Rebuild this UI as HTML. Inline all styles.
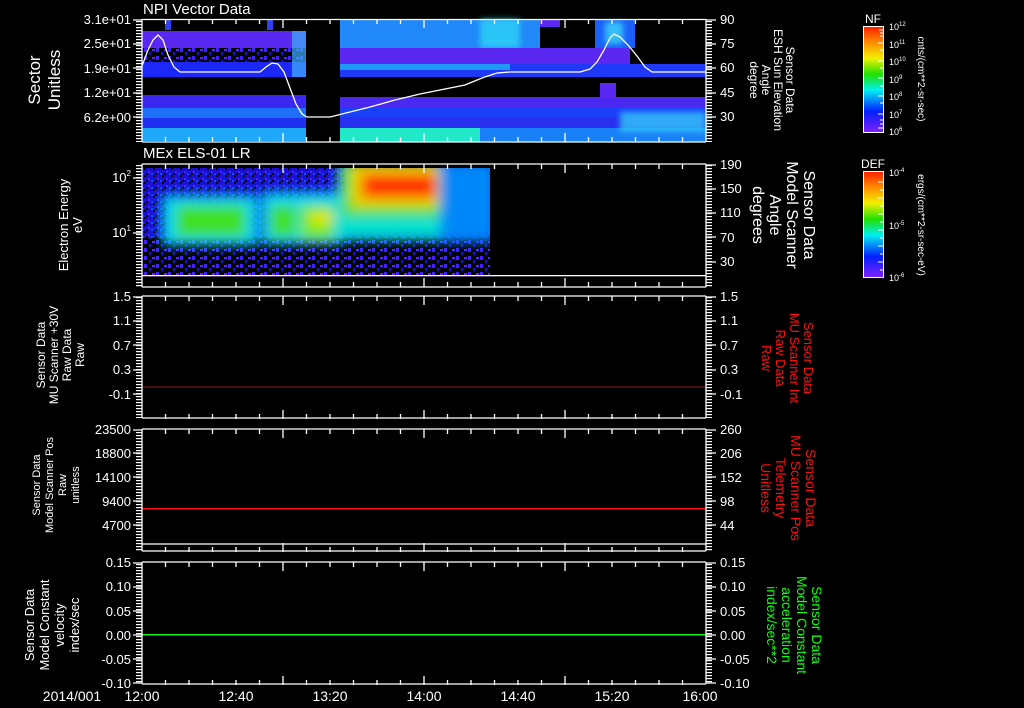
<!DOCTYPE html>
<html><head><meta charset="utf-8"><style>
html,body{margin:0;padding:0;background:#000;width:1024px;height:708px;overflow:hidden}
svg{display:block}
text{font-family:"Liberation Sans",sans-serif;fill:#fff}
</style></head><body>
<svg width="1024" height="708" viewBox="0 0 1024 708" xmlns="http://www.w3.org/2000/svg">
<defs>
<linearGradient id="cb" x1="0" y1="0" x2="0" y2="1">
<stop offset="0" stop-color="#ff2000"/><stop offset="0.15" stop-color="#ff8c00"/><stop offset="0.3" stop-color="#f0f000"/><stop offset="0.45" stop-color="#20e000"/><stop offset="0.6" stop-color="#00f0f0"/><stop offset="0.8" stop-color="#0020ff"/><stop offset="1" stop-color="#8020ff"/>
</linearGradient>
<filter id="bl" x="-30%" y="-30%" width="160%" height="160%"><feGaussianBlur stdDeviation="6"/></filter>
<filter id="bl2" x="-30%" y="-30%" width="160%" height="160%"><feGaussianBlur stdDeviation="3"/></filter>
<clipPath id="c2"><rect x="142" y="168" width="348" height="107"/></clipPath>
<pattern id="spk" width="12" height="8" patternUnits="userSpaceOnUse">
<rect width="12" height="8" fill="#000"/><rect x="0" y="0" width="3" height="4" fill="#4020ff"/><rect x="5" y="4" width="2" height="3" fill="#2010e0"/><rect x="8" y="1" width="3" height="2" fill="#6020ff"/>
</pattern>
<pattern id="noise" width="9" height="7" patternUnits="userSpaceOnUse">
<rect width="9" height="7" fill="#1a10d0"/><rect x="0" y="0" width="2" height="2" fill="#000"/><rect x="4" y="3" width="2" height="2" fill="#5020ff"/><rect x="7" y="5" width="2" height="2" fill="#0050ff"/><rect x="2" y="5" width="2" height="2" fill="#000"/>
</pattern>
<pattern id="tk" width="6" height="3" patternUnits="userSpaceOnUse">
<rect width="6" height="1.2" fill="#fff"/>
</pattern>
</defs>

<!-- Panel 1 spectrogram -->
<g>
<rect x="142" y="31" width="164" height="17" fill="#5a28f0"/>
<rect x="142" y="48" width="164" height="14" fill="url(#spk)"/>
<rect x="142" y="62" width="164" height="15" fill="#1c28f8"/>
<rect x="142" y="95" width="164" height="13" fill="#3a28f0"/>
<rect x="142" y="108" width="164" height="10" fill="#1e70f8"/>
<rect x="142" y="118" width="164" height="10" fill="#2030f0"/>
<rect x="142" y="128" width="164" height="13" fill="#20a8f8"/>
<rect x="292" y="31" width="14" height="46" fill="#40b0f8" opacity="0.7"/>
<rect x="165" y="20" width="6" height="10" fill="#3040f0"/>
<rect x="267" y="20" width="6" height="10" fill="#3040f0"/>

<rect x="340" y="19" width="200" height="29" fill="#2088f8"/>
<rect x="480" y="19" width="40" height="29" fill="#30e0f8" opacity="0.7" filter="url(#bl2)"/>
<rect x="540" y="19" width="20" height="8" fill="#5a28f0"/>
<rect x="595" y="19" width="40" height="29" fill="#1a60f8"/>
<rect x="605" y="22" width="18" height="22" fill="#40e8f8" opacity="0.7" filter="url(#bl2)"/>
<rect x="340" y="48" width="290" height="16" fill="#5a28f0"/>
<rect x="340" y="64" width="366" height="13" fill="#2038f8"/>
<rect x="340" y="64" width="170" height="6" fill="#2098f8"/>
<rect x="600" y="83" width="16" height="14" fill="#5a28f0"/>
<rect x="340" y="97" width="366" height="10" fill="#4a28f0"/>
<rect x="340" y="107" width="366" height="10" fill="#1a40f8"/>
<rect x="340" y="117" width="366" height="11" fill="#2a30f0"/>
<rect x="340" y="128" width="366" height="14" fill="#1a80f8"/>
<rect x="340" y="128" width="140" height="14" fill="#20e8c8"/>
<rect x="620" y="112" width="86" height="20" fill="#30c8f8" opacity="0.8" filter="url(#bl2)"/>
<polyline fill="none" stroke="#fff" stroke-width="1.3" points="142,66 148,50 153,40 158,35 163,40 168,55 174,67 180,72 260,72 266,67 272,63 278,64 284,72 290,88 296,104 302,114 307,117 330,117 350,112 370,107 395,100 420,94 445,89 465,85 482,78 497,73 510,72 580,72 590,69 597,62 604,50 610,38 614,34 620,37 628,45 637,56 645,67 652,72 706,72"/>
</g>

<!-- Panel 2 spectrogram -->
<g clip-path="url(#c2)">
<rect x="142" y="168" width="348" height="70" fill="url(#noise)"/>
<rect x="142" y="238" width="348" height="37" fill="url(#spk)"/>
<g filter="url(#bl)">
<rect x="162" y="195" width="96" height="50" fill="#00d8f0"/>
<rect x="176" y="205" width="70" height="32" fill="#40e020"/>
<rect x="262" y="192" width="80" height="52" fill="#00d8f0"/>
<rect x="270" y="205" width="26" height="32" fill="#40e020"/>
<rect x="300" y="205" width="34" height="35" fill="#70e820"/>
<rect x="310" y="212" width="22" height="12" fill="#e8e800"/>
<rect x="338" y="162" width="105" height="78" fill="#00e0d0"/>
<rect x="342" y="162" width="98" height="54" fill="#60e020"/>
<rect x="352" y="165" width="86" height="41" fill="#f0d000"/>
<rect x="362" y="174" width="74" height="24" fill="#ff3000"/>
<rect x="440" y="162" width="56" height="80" fill="#0088f8"/>
</g>
</g>
<rect x="142" y="275" width="564" height="1.3" fill="#fff"/>

<!-- Data lines -->
<rect x="142" y="386.5" width="564" height="1" fill="#8a2020"/>
<rect x="142" y="508" width="564" height="1.4" fill="#ff1010"/>
<rect x="142" y="634" width="564" height="1.4" fill="#10ff10"/>

<!-- Panel frames -->
<g fill="none" stroke="#fff" stroke-width="1.3">
<path d="M142,19.5H706M142,142H706M142,164H706M142,287H706M142,296H706M142,418H706M142,429H706M142,544H706M142,551H706M142,562H706M142,684H706"/>
<path d="M142,19V142M706,19V142M142,164V287M706,164V287M142,296V418M706,296V418M142,429V551M706,429V551M142,562V684M706,562V684"/>
</g>
<!-- dense axis ticks -->
<g fill="url(#tk)">
<rect x="136" y="20" width="6" height="122"/><rect x="706" y="20" width="6" height="122"/>
<rect x="136" y="165" width="6" height="122"/><rect x="706" y="165" width="6" height="122"/>
<rect x="136" y="297" width="6" height="121"/><rect x="706" y="297" width="6" height="121"/>
<rect x="136" y="430" width="6" height="121"/><rect x="706" y="430" width="6" height="121"/>
<rect x="136" y="563" width="6" height="121"/><rect x="706" y="563" width="6" height="121"/>
</g>
<g stroke="#fff" stroke-width="1.3">
<path d="M133,20H142M133,44H142M133,68H142M133,93H142M133,117H142M706,20H716M706,44H716M706,68H716M706,93H716M706,117H716"/>
<path d="M706,165H716M706,189H716M706,213H716M706,237H716M706,262H716M133,178H142M133,233H142"/>
<path d="M706,297H716M706,321H716M706,345H716M706,370H716M706,394H716M133,297H142M133,321H142M133,345H142M133,370H142M133,394H142"/>
<path d="M706,430H716M706,453H716M706,477H716M706,501H716M706,525H716M133,430H142M133,453H142M133,477H142M133,501H142M133,525H142"/>
<path d="M706,563H716M706,587H716M706,611H716M706,635H716M706,659H716M706,683H716M133,563H142M133,587H142M133,611H142M133,635H142M133,659H142M133,683H142"/>
</g>
<!-- time ticks -->
<g stroke="#fff" stroke-width="1.3" id="tt">
<path d="M165.5,19v5M189,19v5M212.5,19v5M236,19v5M259.5,19v5M283,19v9M306.5,19v5M330,19v5M353.5,19v5M377,19v5M400.5,19v5M424,19v9M447.5,19v5M471,19v5M494.5,19v5M518,19v5M541.5,19v5M565,19v9M588.5,19v5M612,19v5M635.5,19v5M659,19v5M682.5,19v5"/>
<path d="M165.5,142v-5M189,142v-5M212.5,142v-5M236,142v-5M259.5,142v-5M283,142v-9M306.5,142v-5M330,142v-5M353.5,142v-5M377,142v-5M400.5,142v-5M424,142v-9M447.5,142v-5M471,142v-5M494.5,142v-5M518,142v-5M541.5,142v-5M565,142v-9M588.5,142v-5M612,142v-5M635.5,142v-5M659,142v-5M682.5,142v-5"/>
</g>
<use href="#tt" y="145"/>
<use href="#tt" y="277"/>
<use href="#tt" y="410"/>
<use href="#tt" y="543"/>

<!-- Left axis labels -->
<g font-size="13" text-anchor="end">
<text x="131" y="24">3.1e+01</text><text x="131" y="48">2.5e+01</text><text x="131" y="73">1.9e+01</text><text x="131" y="97">1.2e+01</text><text x="131" y="122">6.2e+00</text>
<text x="131" y="182">10<tspan font-size="8" dy="-6">2</tspan></text><text x="131" y="237">10<tspan font-size="8" dy="-6">1</tspan></text>
<text x="131" y="301">1.5</text><text x="131" y="325">1.1</text><text x="131" y="350">0.7</text><text x="131" y="374">0.3</text><text x="131" y="399">-0.1</text>
<text x="131" y="434">23500</text><text x="131" y="458">18800</text><text x="131" y="482">14100</text><text x="131" y="506">9400</text><text x="131" y="530">4700</text>
<text x="131" y="567">0.15</text><text x="131" y="591">0.10</text><text x="131" y="616">0.05</text><text x="131" y="640">0.00</text><text x="131" y="664">-0.05</text><text x="131" y="688">-0.10</text>
</g>
<!-- Right axis labels -->
<g font-size="13">
<text x="720" y="24">90</text><text x="720" y="48">75</text><text x="720" y="72">60</text><text x="720" y="97">45</text><text x="720" y="121">30</text>
<text x="720" y="169">190</text><text x="720" y="193">150</text><text x="720" y="217">110</text><text x="720" y="242">70</text><text x="720" y="266">30</text>
<text x="720" y="301">1.5</text><text x="720" y="325">1.1</text><text x="720" y="350">0.7</text><text x="720" y="374">0.3</text><text x="720" y="399">-0.1</text>
<text x="720" y="434">260</text><text x="720" y="458">206</text><text x="720" y="482">152</text><text x="720" y="506">98</text><text x="720" y="530">44</text>
<text x="720" y="567">0.15</text><text x="720" y="591">0.10</text><text x="720" y="616">0.05</text><text x="720" y="640">0.00</text><text x="720" y="664">-0.05</text><text x="720" y="688">-0.10</text>
</g>
<!-- titles -->
<text x="143" y="14" font-size="15">NPI Vector Data</text>
<text x="143" y="158" font-size="15">MEx ELS-01 LR</text>
<!-- time labels -->
<g font-size="14" text-anchor="middle">
<text x="72" y="701">2014/001</text><text x="142" y="701">12:00</text><text x="236" y="701">12:40</text><text x="330" y="701">13:20</text><text x="424" y="701">14:00</text><text x="518" y="701">14:40</text><text x="612" y="701">15:20</text><text x="700" y="701">16:00</text>
</g>

<!-- Left rotated labels -->
<g text-anchor="middle">
<text transform="translate(40,80) rotate(-90)" font-size="17"><tspan x="0" y="0">Sector</tspan><tspan x="0" dy="20">Unitless</tspan></text>
<text transform="translate(68,225) rotate(-90)" font-size="13"><tspan x="0" y="0">Electron Energy</tspan><tspan x="0" dy="14">eV</tspan></text>
<text transform="translate(45,355) rotate(-90)" font-size="12"><tspan x="0" y="0">Sensor Data</tspan><tspan x="0" dy="13">MU Scanner +30V</tspan><tspan x="0" dy="13">Raw Data</tspan><tspan x="0" dy="13">Raw</tspan></text>
<text transform="translate(40,485) rotate(-90)" font-size="11"><tspan x="0" y="0">Sensor Data</tspan><tspan x="0" dy="13">Model Scanner Pos</tspan><tspan x="0" dy="13">Raw</tspan><tspan x="0" dy="13">unitless</tspan></text>
<text transform="translate(34,625) rotate(-90)" font-size="13"><tspan x="0" y="0">Sensor Data</tspan><tspan x="0" dy="15">Model Constant</tspan><tspan x="0" dy="15">velocity</tspan><tspan x="0" dy="15">index/sec</tspan></text>
</g>
<!-- Right rotated labels -->
<g text-anchor="middle">
<text transform="translate(786,80) rotate(90)" font-size="12"><tspan x="0" y="0">Sensor Data</tspan><tspan x="0" dy="12">ESH Sun Elevation</tspan><tspan x="0" dy="12">Angle</tspan><tspan x="0" dy="12">degree</tspan></text>
<text transform="translate(804,215) rotate(90)" font-size="16"><tspan x="0" y="0">Sensor Data</tspan><tspan x="0" dy="17">Model Scanner</tspan><tspan x="0" dy="17">Angle</tspan><tspan x="0" dy="17">degrees</tspan></text>
<text transform="translate(804,358) rotate(90)" font-size="13"><tspan x="0" y="0" style="fill:#ff1010">Sensor Data</tspan><tspan x="0" dy="14" style="fill:#ff1010">MU Scanner Int</tspan><tspan x="0" dy="14" style="fill:#ff1010">Raw Data</tspan><tspan x="0" dy="14" style="fill:#ff1010">Raw</tspan></text>
<text transform="translate(806,488) rotate(90)" font-size="14"><tspan x="0" y="0" style="fill:#ff1010">Sensor Data</tspan><tspan x="0" dy="15" style="fill:#ff1010">MU Scanner Pos</tspan><tspan x="0" dy="15" style="fill:#ff1010">Telemetry</tspan><tspan x="0" dy="15" style="fill:#ff1010">Unitless</tspan></text>
<text transform="translate(812,625) rotate(90)" font-size="14"><tspan x="0" y="0" style="fill:#10ff10">Sensor Data</tspan><tspan x="0" dy="15" style="fill:#10ff10">Model Constant</tspan><tspan x="0" dy="15" style="fill:#10ff10">acceleration</tspan><tspan x="0" dy="15" style="fill:#10ff10">index/sec**2</tspan></text>
</g>

<!-- Colorbars -->
<rect x="863.5" y="26.5" width="20" height="106" fill="url(#cb)" stroke="#fff" stroke-width="1"/>
<rect x="863.5" y="171.5" width="20" height="106" fill="url(#cb)" stroke="#fff" stroke-width="1"/>
<g stroke="#fff" stroke-width="1">
<path d="M879,30h4M880,33h3M880,36h3M878,43h5M880,50h3M878,61h5M880,68h3M878,78h5M880,86h3M878,96h5M880,103h3M878,114h5M880,120h3M880,124h3M878,128h5"/>
<path d="M878,182h5M880,190h3M878,198h5M880,206h3M878,214h5M880,222h3M878,230h5M880,238h3M878,246h5M880,254h3M878,262h5M880,270h3"/>
</g>
<g font-size="12" text-anchor="middle"><text x="873" y="23">NF</text><text x="873" y="168">DEF</text></g>
<g font-size="9">
<text x="889" y="30">10<tspan font-size="6" dy="-4">12</tspan></text>
<text x="889" y="48">10<tspan font-size="6" dy="-4">11</tspan></text>
<text x="889" y="65">10<tspan font-size="6" dy="-4">10</tspan></text>
<text x="889" y="83">10<tspan font-size="6" dy="-4">9</tspan></text>
<text x="889" y="100">10<tspan font-size="6" dy="-4">8</tspan></text>
<text x="889" y="118">10<tspan font-size="6" dy="-4">7</tspan></text>
<text x="889" y="135">10<tspan font-size="6" dy="-4">6</tspan></text>
<text x="889" y="176">10<tspan font-size="6" dy="-4">-4</tspan></text>
<text x="889" y="229">10<tspan font-size="6" dy="-4">-5</tspan></text>
<text x="889" y="281">10<tspan font-size="6" dy="-4">-6</tspan></text>
</g>
<g font-size="10" text-anchor="middle">
<text transform="translate(918,79) rotate(90)">cnts/(cm**2-sr-sec)</text>
<text transform="translate(918,225) rotate(90)">ergs/(cm**2-sr-sec-eV)</text>
</g>
</svg>
</body></html>
